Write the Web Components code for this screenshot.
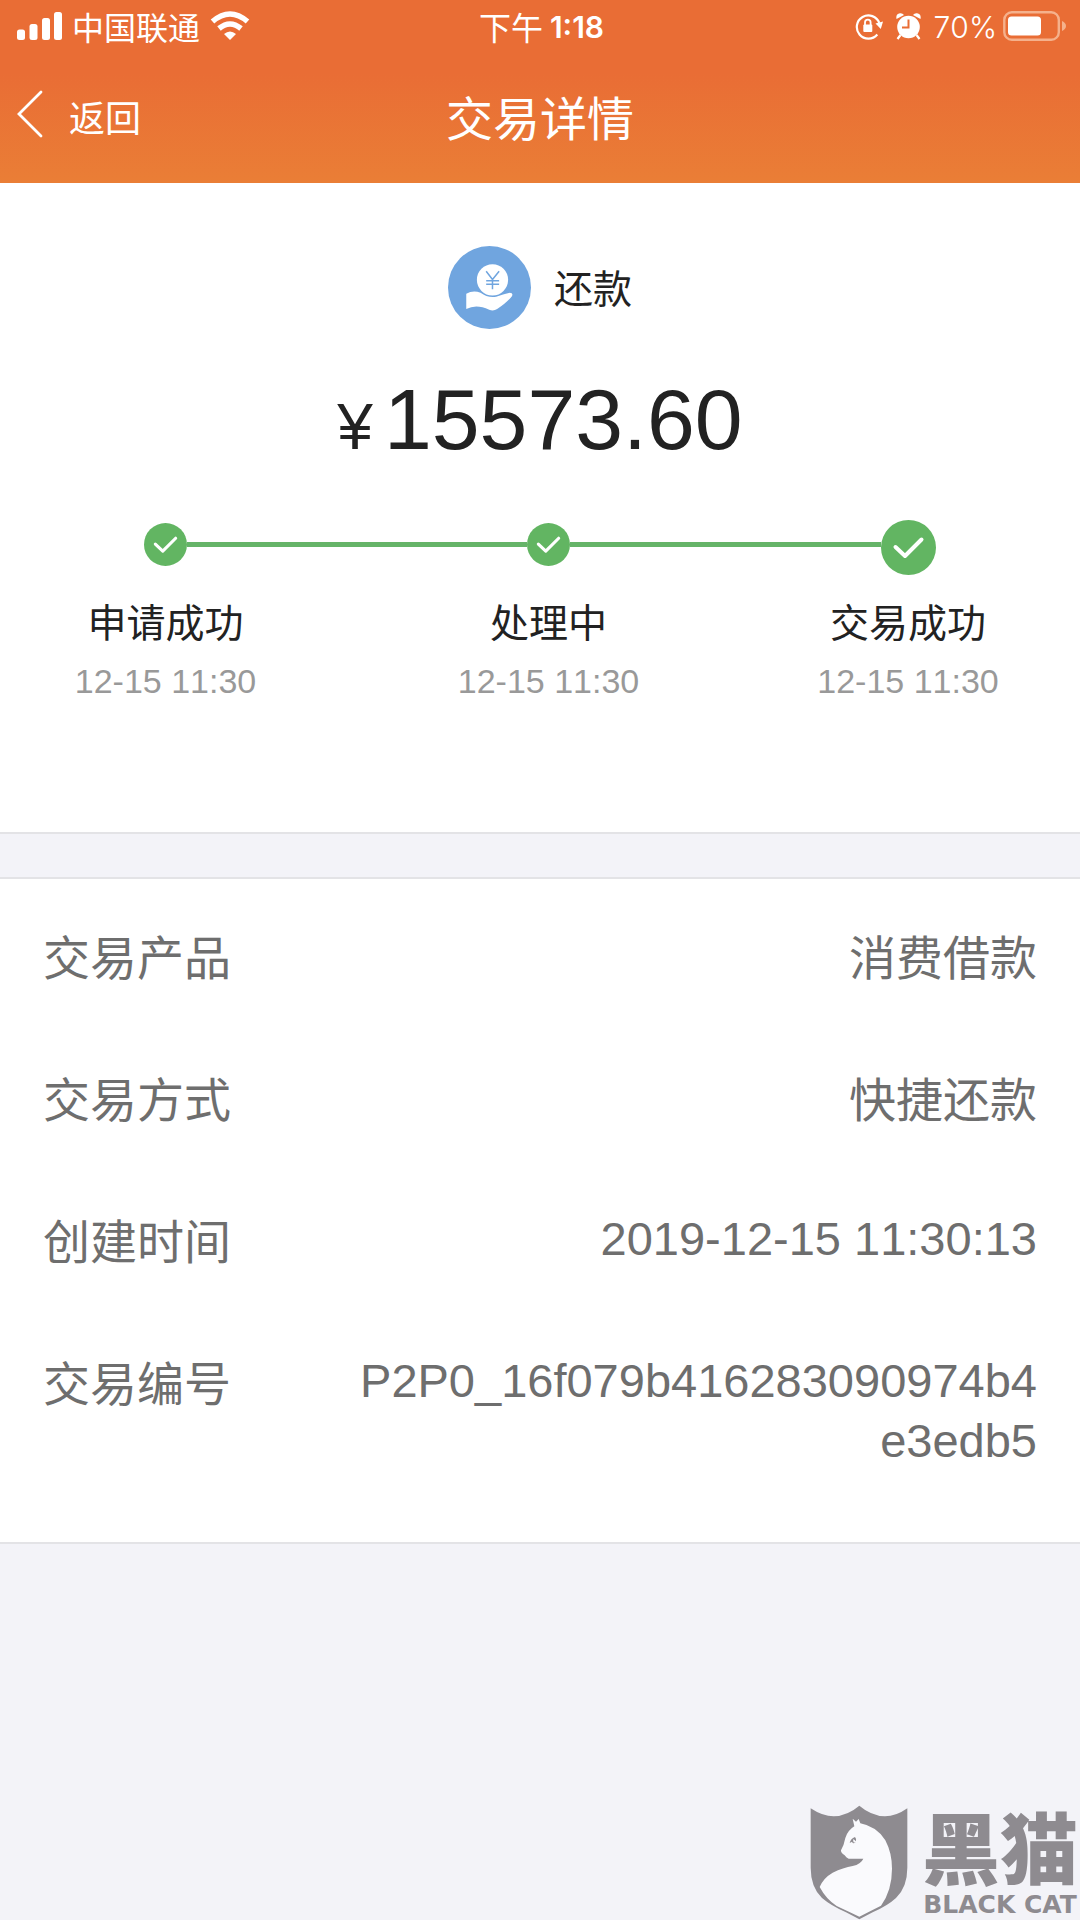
<!DOCTYPE html>
<html lang="zh-CN">
<head>
<meta charset="utf-8">
<meta name="viewport" content="width=device-width, initial-scale=1">
<title>交易详情</title>
<style>
  html, body { margin: 0; background: #f3f3f8; }
  body { font-family: "Noto Sans CJK SC", sans-serif; font-kerning: none; color: #222; }
</style>
</head>
<body>
<transaction-page>
  <app-header slot="header" heading="交易详情" back="返回">
    <status-bar slot="status" carrier="中国联通" period="下午" time="1:18" battery="70%"></status-bar>
  </app-header>
  <payment-summary kind="还款" currency="¥" amount="15573.60">
    <progress-steps>
      <progress-step at="12-15 11:30" first>申请成功</progress-step>
      <progress-step at="12-15 11:30">处理中</progress-step>
      <progress-step at="12-15 11:30" last>交易成功</progress-step>
    </progress-steps>
  </payment-summary>
  <detail-list>
    <detail-row label="交易产品">消费借款</detail-row>
    <detail-row label="交易方式">快捷还款</detail-row>
    <detail-row label="创建时间" latin>2019-12-15 11:30:13</detail-row>
    <detail-row label="交易编号" latin>P2P0_16f079b416283090974b4e3edb5</detail-row>
  </detail-list>
  <brand-mark slot="footer" name="黑猫" latin="BLACK CAT"></brand-mark>
</transaction-page>

<script>
  const define = (name, render) => customElements.define(name, class extends HTMLElement {
    constructor() {
      super();
      this.attachShadow({ mode: "open" }).innerHTML = render(key => this.getAttribute(key) || "");
    }
  });

  define("transaction-page", () => `
    <style>
      :host { display: flex; flex-direction: column; min-height: 100vh; }
      main { display: flex; flex-direction: column; gap: 43px; }
      footer { display: flex; justify-content: flex-end; margin-top: auto; padding-right: 2px; }
    </style>
    <slot name="header"></slot>
    <main><slot></slot></main>
    <footer><slot name="footer"></slot></footer>`);

  define("status-bar", a => `
    <style>
      :host { display: grid; grid-template-columns: 1fr auto 1fr; align-items: center; height: 52px;
              padding: 0 14px 2px 17px; font-size: 32px; line-height: 50px; }
      div { display: flex; align-items: center; }
      .left { gap: 10px; }
      .time { gap: 7px; }
      .right { justify-content: flex-end; gap: 13px; }
      .power { gap: 6px; }
      b, .level { font-family: Inter, sans-serif; font-size: 30px; padding-top: 2px; }
      b { font-weight: 600; }
      .level { font-weight: 300; }
      svg { display: block; }
    </style>
    <div class="left">
      <svg width="45" height="28" viewBox="0 0 45 28" fill="#fff" aria-hidden="true">
        <rect x="0" y="17.500" width="8" height="10.500" rx="2.500"/><rect x="12.500" y="12" width="8" height="16" rx="2.500"/>
        <rect x="25" y="6" width="8" height="22" rx="2.500"/><rect x="37" y="0" width="8" height="28" rx="2.500"/>
      </svg>
      <span>${a("carrier")}</span>
      <svg width="40" height="30" viewBox="0 0 40 30" aria-hidden="true">
        <path d="M2.500 10.500Q20-4.500 37.500 10.500" fill="none" stroke="#fff" stroke-width="5.500"/>
        <path d="M9 17.500Q20 8.500 31 17.500" fill="none" stroke="#fff" stroke-width="5.500"/>
        <path d="M14 23Q20 18 26 23L20 29Z" fill="#fff"/>
      </svg>
    </div>
    <div class="time"><span>${a("period")}</span><b>${a("time")}</b></div>
    <div class="right">
      <svg width="28" height="27" viewBox="0 0 28 27" fill="none" stroke="#fff" stroke-width="2.200" aria-hidden="true">
        <path d="M22.300 21.500A11.600 11.600 0 1 1 24.300 10"/>
        <path d="M20.500 10.500L28 8.500L25.800 16Z" fill="#fff" stroke="none"/>
        <path d="M10 12V9.500a2.800 2.800 0 0 1 5.600 0V12" stroke-width="1.800"/>
        <rect x="8.300" y="11.500" width="9" height="7.500" rx="1" fill="#fff" stroke="none"/>
      </svg>
      <svg width="25" height="27" viewBox="0 0 25 27" fill="#fff" aria-hidden="true">
        <circle cx="12.500" cy="14" r="11.300"/>
        <path d="M0.500 6Q-.5 1 4 .3Q6.500 0 8 2ZM24.500 6Q25.500 1 21 .3Q18.500 0 17 2Z"/>
        <path d="M4.500 22L1.500 26M20.500 22L23.500 26" stroke="#fff" stroke-width="2.200"/>
        <path d="M12.500 6.500V14.500H6" fill="none" stroke="#e96d35" stroke-width="2"/>
      </svg>
      <div class="power">
        <span class="level">${a("battery")}</span>
        <svg width="63" height="30" viewBox="0 0 63 30" aria-hidden="true">
          <rect x="1.300" y="1.300" width="54.500" height="27.400" rx="7.500" fill="none" stroke="#f5b18c" stroke-width="2.400"/>
          <rect x="5" y="5.500" width="33" height="19" rx="3.500" fill="#fff"/>
          <path d="M59 10Q63 12 63 15Q63 18 59 20Z" fill="#f5b18c"/>
        </svg>
      </div>
    </div>`);

  define("app-header", a => `
    <style>
      :host { display: block; color: #fff; background: linear-gradient(#e96d35 40%, #ea7e36); }
      nav { display: grid; grid-template-columns: 1fr auto 1fr; align-items: center; height: 123px;
            padding: 0 17px 6px; }
      button { display: flex; align-items: center; gap: 26px; justify-self: start; padding: 0; border: 0;
               background: none; color: inherit; font: inherit; font-size: 36px; line-height: 52px; }
      svg { display: block; margin-bottom: 4px; }
      h1 { margin: 0; font-size: 47px; font-weight: 400; line-height: 60px; }
    </style>
    <slot name="status"></slot>
    <nav>
      <button type="button">
        <svg width="26" height="48" viewBox="0 0 26 48" fill="none" stroke="#fff" stroke-width="2.800" stroke-linecap="round" aria-hidden="true"><path d="M24 2L2 24L24 46"/></svg>
        <span>${a("back")}</span>
      </button>
      <h1>${a("heading")}</h1>
    </nav>`);

  define("payment-summary", a => `
    <style>
      :host { display: block; padding: 63px 0 131px; background: #fff; border-bottom: 2px solid #e3e3e6; }
      .kind { display: flex; align-items: center; justify-content: center; gap: 23px; font-size: 39px; line-height: 50px; }
      .kind span { padding-bottom: 4px; }
      .amount { display: flex; align-items: baseline; justify-content: center; gap: 11px; margin: 40px 0 51px;
                font-family: "Liberation Sans", sans-serif; font-size: 86px; line-height: 100px; }
      .currency { font-size: 64px; line-height: 64px; }
    </style>
    <div class="kind">
      <svg width="83" height="83" viewBox="0 0 250 250" aria-hidden="true">
        <circle cx="125" cy="125" r="125" fill="#70a5df"/>
        <circle cx="134" cy="102" r="47" fill="#fff"/>
        <path d="M115 76L134 101L154 76M134 101V130M115 105H154M115 115H154" fill="none" stroke="#70a5df" stroke-width="4.500"/>
        <path d="M55 144Q76 132 98 141Q119 157 145 153Q166 146 186 141Q198 141 192 152Q178 169 148 190Q137 197 124 192Q85 173 55 190Z" fill="#fff"/>
      </svg>
      <span>${a("kind")}</span>
    </div>
    <div class="amount"><span class="currency">${a("currency")}</span><span>${a("amount")}</span></div>
    <slot></slot>`);

  define("progress-steps", () => `
    <style>:host { display: grid; grid-template-columns: 331fr 435fr 284fr; padding-right: 30px; }</style>
    <slot></slot>`);

  define("progress-step", a => `
    <style>
      :host { display: block; text-align: center; --line: #65b468; }
      .marker { display: flex; align-items: flex-start; height: 55px; }
      .marker::before, .marker::after { content: ""; flex: 1; height: 5px; margin-top: 22px; background: var(--line); }
      :host([first]) .marker::before, :host([last]) .marker::after { background: none; }
      svg { display: block; width: 43px; height: 43px; margin-top: 3px; }
      :host([last]) svg { width: 55px; height: 55px; margin-top: 0; }
      .name { margin-top: 20px; font-size: 39px; line-height: 50px; }
      time { display: block; margin-top: 16px; font-family: "Liberation Sans", sans-serif; font-size: 34px;
             line-height: 40px; color: #999; }
    </style>
    <div class="marker">
      <svg viewBox="0 0 55 55" aria-hidden="true"><circle cx="27.500" cy="27.500" r="27.500" fill="#62b562"/>
        <path d="M14.500 27L24 36L40.500 19.500" fill="none" stroke="#fff" stroke-width="4" stroke-linecap="round" stroke-linejoin="round"/></svg>
    </div>
    <div class="name"><slot></slot></div>
    <time>${a("at")}</time>`);

  define("detail-list", () => `
    <style>
      :host { display: flex; flex-direction: column; gap: 82px; padding: 46px 43px 71px; background: #fff;
              border: solid #e3e3e6; border-width: 2px 0; font-size: 47px; line-height: 60px; color: #6e6e6e; }
    </style>
    <slot></slot>`);

  define("detail-row", a => `
    <style>
      :host { display: flex; justify-content: space-between; align-items: flex-start; }
      .value { max-width: 70%; text-align: right; word-break: break-all; }
      :host([latin]) .value { font-family: "Liberation Sans", sans-serif; }
    </style>
    <span>${a("label")}</span><span class="value"><slot></slot></span>`);

  define("brand-mark", a => `
    <style>
      :host { display: flex; align-items: flex-end; gap: 14px; color: #8e8b90; }
      svg { display: block; }
      .words { display: flex; flex-direction: column; align-items: center; }
      .name { font: 900 78px/76px "Liberation Sans", "Noto Sans CJK SC", sans-serif; }
      .latin { font: bold 25px/30px "DejaVu Sans", sans-serif; }
    </style>
    <svg width="98" height="115" viewBox="62 44 294 345" aria-hidden="true">
      <path d="M64 54Q100 78 133 78Q175 76 210 46Q245 76 287 78Q320 78 354 54V232Q354 290 320 323Q295 346 250 366L210 387L170 366Q125 346 98 323Q64 290 64 232Z" fill="#8e8b90"/>
      <path d="M190 85L200 94L208 86L213 99Q262 108 288 150Q308 188 308 235Q308 300 275 346Q245 361 210 379Q165 358 142 347Q110 326 91 290Q102 263 130 247Q162 232 190 227Q215 221 222 205L178 205Q170 202 166 195Q154 188 155 180Q164 164 168 143Q175 120 195 108Z" fill="#fafafd"/>
      <path d="M181 158Q184 145 197 140Q202 146 200 153L192 146Q190 154 194 157L199 154Q192 163 188 154Z" fill="#8e8b90"/>
    </svg>
    <div class="words"><span class="name">${a("name")}</span><span class="latin">${a("latin")}</span></div>`);
</script>
</body>
</html>
